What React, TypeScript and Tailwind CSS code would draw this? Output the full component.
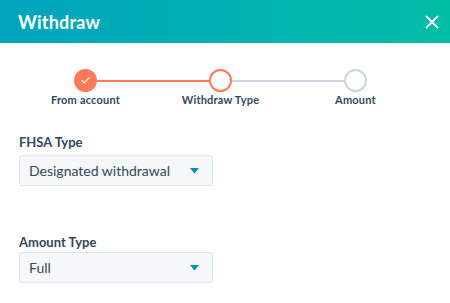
import { Check, X } from 'lucide-react'

type Step = {
  label: string
  state: 'done' | 'current' | 'todo'
}

const steps: Step[] = [
  { label: 'From account', state: 'done' },
  { label: 'Withdraw Type', state: 'current' },
  { label: 'Amount', state: 'todo' },
]

function Caret() {
  return (
    <svg width="9" height="6" viewBox="0 0 9 6" className="shrink-0">
      <path d="M0 0h9L4.5 5.5z" fill="#0091ae" />
    </svg>
  )
}

function Select({ value }: { value: string }) {
  return (
    <div className="flex items-center justify-between w-[194px] h-[31px] pl-[9px] pr-[13px] bg-[#f5f8fa] border border-[#dfe3eb] rounded-[3px]">
      <span className="text-[14px] leading-none text-[#33475b]">{value}</span>
      <Caret />
    </div>
  )
}

export default function App() {
  return (
    <div className="w-[450px] h-[303px] bg-white overflow-hidden font-['Lato',sans-serif] text-[#33475b]">
      <header className="flex items-center justify-between h-[43px] pl-[18px] pr-[7px] bg-gradient-to-r from-[#00a4bd] to-[#00bda5]">
        <h1 className="text-[18px] font-bold text-white leading-none tracking-[0.2px]">Withdraw</h1>
        <X className="w-[22px] h-[22px] text-white" strokeWidth={2} />
      </header>

      <div className="grid grid-cols-3 w-[405px] ml-[18px] mt-[26px]">
        {steps.map((step, i) => {
          const leftColor = i === 0 ? 'bg-transparent' : i === 1 ? 'bg-[#ff7a59]' : 'bg-[#cbd6e2]'
          const rightColor = i === 2 ? 'bg-transparent' : i === 0 ? 'bg-[#ff7a59]' : 'bg-[#cbd6e2]'
          return (
            <div key={step.label} className="flex flex-col items-center">
              <div className="flex items-center w-full">
                <div className={`flex-1 h-[2px] ${leftColor}`} />
                {step.state === 'done' && (
                  <div className="w-[23px] h-[23px] rounded-full bg-[#ff7a59] flex items-center justify-center">
                    <Check className="w-[11px] h-[11px] text-white" strokeWidth={2.5} />
                  </div>
                )}
                {step.state === 'current' && (
                  <div className="w-[23px] h-[23px] rounded-full bg-white border-2 border-[#ff7a59]" />
                )}
                {step.state === 'todo' && (
                  <div className="w-[23px] h-[23px] rounded-full bg-white border-2 border-[#cbd6e2]" />
                )}
                <div className={`flex-1 h-[2px] ${rightColor}`} />
              </div>
              <span className="mt-[1px] text-[11px] font-bold leading-[14px] tracking-[0.2px]">{step.label}</span>
            </div>
          )
        })}
      </div>

      <div className="pl-[19px] mt-[26px]">
        <label className="block text-[13px] font-bold leading-[18px]">FHSA Type</label>
        <div className="mt-[4px]">
          <Select value="Designated withdrawal" />
        </div>

        <label className="block mt-[47px] text-[13px] font-bold leading-[18px]">Amount Type</label>
        <div className="mt-[1px]">
          <Select value="Full" />
        </div>
      </div>
    </div>
  )
}
